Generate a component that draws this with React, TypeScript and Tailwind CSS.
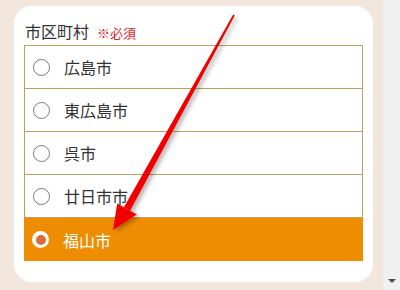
const cities = ['広島市', '東広島市', '呉市', '廿日市市', '福山市'];
const selected = '福山市';

function Radio({ checked }: { checked: boolean }) {
  if (checked) {
    return (
      <span className="flex h-[17px] w-[17px] items-center justify-center rounded-full bg-white">
        <span className="h-[10px] w-[10px] rounded-full bg-[#dc6a3c]" />
      </span>
    );
  }
  return <span className="h-[17px] w-[17px] rounded-full border border-[#7a7a7a] bg-white" />;
}

function CityRow({ name }: { name: string }) {
  const checked = name === selected;
  return (
    <label
      className={
        checked
          ? 'flex h-[44px] items-center gap-[14px] border-t border-[#b9a25c] bg-[#ee8d02] pl-[8px] text-white'
          : 'flex h-[43px] items-center gap-[14px] border-t border-[#b9a25c] bg-white pl-[8px] text-[#333]'
      }
    >
      <Radio checked={checked} />
      <span className="text-[16px] leading-6">{name}</span>
    </label>
  );
}

function Arrow() {
  return (
    <svg className="pointer-events-none absolute inset-0" width="400" height="290" viewBox="0 0 400 290">
      <defs>
        <filter id="sh" x="-20%" y="-20%" width="140%" height="140%">
          <feDropShadow dx="3" dy="2" stdDeviation="2" floodColor="#000" floodOpacity="0.3" />
        </filter>
      </defs>
      <g filter="url(#sh)" fill="#f20000">
        <polygon points="234.8,15.4 233.2,14.6 123.9,207.3 130.1,210.7" />
        <polygon points="113,230 117.2,203.6 136.8,214.4" />
      </g>
    </svg>
  );
}

export default function App() {
  return (
    <div
      className="relative flex h-[290px] w-[400px] overflow-hidden bg-[#f3e6dd]"
      style={{ fontFamily: '"Noto Sans CJK JP", "Noto Sans", sans-serif' }}
    >
      {/* Page */}
      <main className="flex-1 pl-[14px] pr-[10px] pt-[6px]">
        <div className="h-[276px] rounded-[18px] bg-white px-[10px] pt-[13px]">
          <div className="mb-[2px] flex items-baseline gap-[8px] px-[1px]">
            <span className="text-[16px] leading-6 text-[#333]">市区町村</span>
            <span className="text-[13px] text-[#d6232a]">※必須</span>
          </div>
          <div className="flex flex-col border-x border-b border-[#b9a25c] [&>*:last-child]:-mx-px [&>*:last-child]:-mb-px">
            {cities.map((c) => (
              <CityRow key={c} name={c} />
            ))}
          </div>
        </div>
      </main>

      {/* Scrollbar */}
      <div className="flex w-[17px] flex-col justify-end bg-[#f0f0f0] pb-[7px]">
        <div className="mx-auto h-0 w-0 border-x-[4px] border-t-[4px] border-x-transparent border-t-[#505050]" />
      </div>

      <Arrow />
    </div>
  );
}
